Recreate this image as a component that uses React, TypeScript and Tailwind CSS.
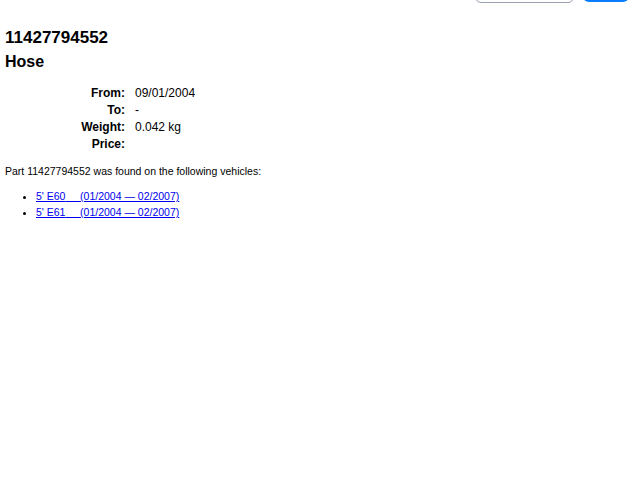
export default function App() {
  const vehicles = [
    { model: "5' E60", range: "(01/2004 — 02/2007)" },
    { model: "5' E61", range: "(01/2004 — 02/2007)" },
  ];

  const details = [
    { label: "From:", value: "09/01/2004" },
    { label: "To:", value: "-" },
    { label: "Weight:", value: "0.042 kg" },
    { label: "Price:", value: "" },
  ];

  return (
    <div className="min-h-[480px] bg-white px-[5px] text-black" style={{ fontFamily: '"Liberation Sans", Arial, sans-serif' }}>
      <div className="-mt-[28px] flex items-start justify-end gap-[9px] pr-[6px]">
        <div className="h-[31px] w-[99px] rounded-[6px] border border-gray-400 bg-white" />
        <div className="h-[30px] w-[46px] rounded-[6px] bg-[#0a7cff]" />
      </div>

      <h1 className="mt-[24px] text-[17px] font-bold leading-[22px]">11427794552</h1>
      <h2 className="mt-[2px] text-[16px] font-bold leading-[22px]">Hose</h2>

      <div className="mt-[12px] grid grid-cols-[120px_auto] gap-x-[10px] text-[12px] leading-[17px]">
        {details.map((d) => (
          <div key={d.label} className="contents">
            <div className="text-right font-bold">{d.label}</div>
            <div>{d.value}</div>
          </div>
        ))}
      </div>

      <p className="mt-[11px] text-[10.5px] leading-[14px]">Part 11427794552 was found on the following vehicles:</p>

      <ul className="mt-[10px] list-disc pl-[31px] text-[10.5px] leading-[16px]">
        {vehicles.map((v) => (
          <li key={v.model}>
            <a href="#" className="text-[#0000ee] underline">
              {v.model}
              {"\u00a0\u00a0\u00a0\u00a0\u00a0"}
              {v.range}
            </a>
          </li>
        ))}
      </ul>
    </div>
  );
}
